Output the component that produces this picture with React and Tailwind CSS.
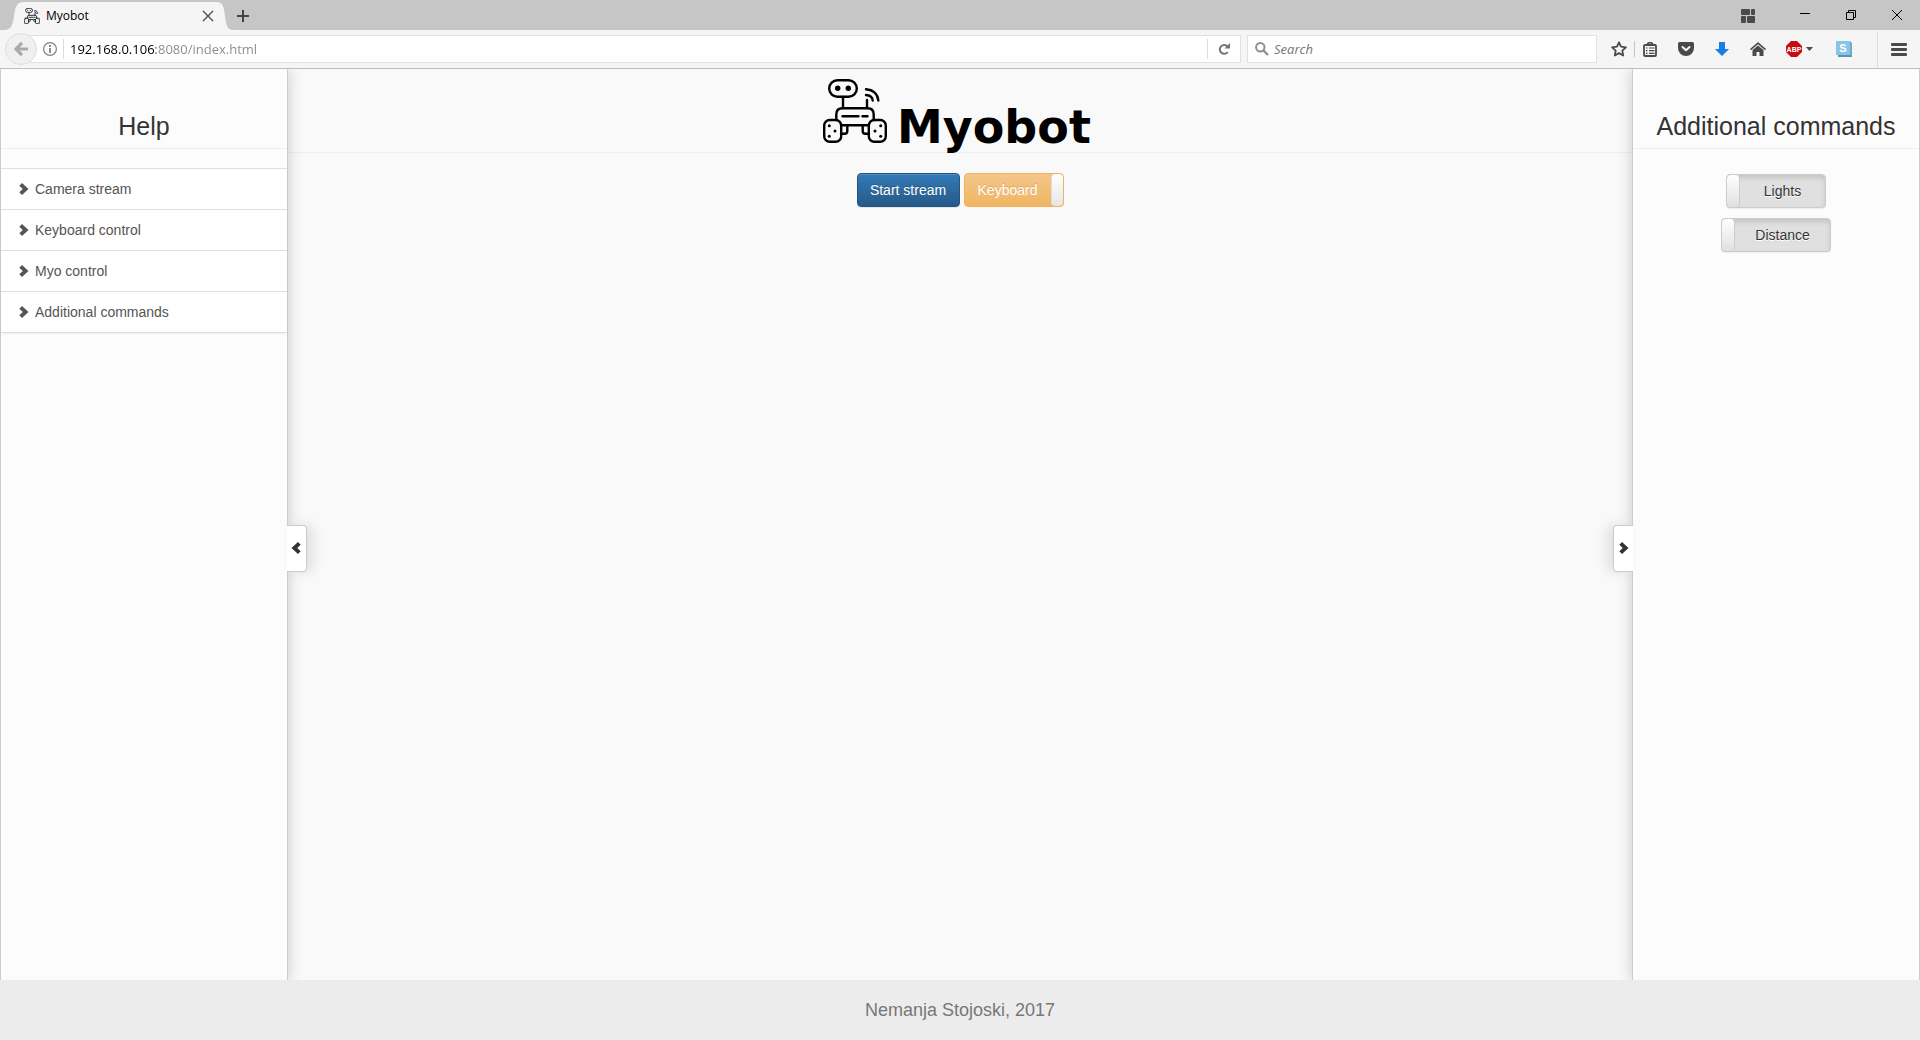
import React, { useState } from "react";

function Robot({ className, strokeWidth = 2.4 }) {
  return (
    <svg viewBox="0 0 64 64" className={className} fill="none" stroke="currentColor" strokeWidth={strokeWidth} strokeLinecap="round" aria-hidden="true">
      <rect x="6.2" y="1.2" width="27.6" height="16.6" rx="8.3" />
      <circle cx="14.7" cy="9.3" r="2.7" fill="currentColor" stroke="none" />
      <circle cx="25.3" cy="9.3" r="2.7" fill="currentColor" stroke="none" />
      <path d="M20 18v11M44 21v8M43 10.3C50 10.8 54.800 15 55.300 21.500M43 16c4 .3 6.500 2.500 6.700 5.500" />
      <path d="M13.300 41v-5.500q0-6.200 6.200-6.200h25q6.200 0 6.200 6.200V41M18 46.300h28" />
      <path d="M19.500 37.300h16M39.500 37.300h5" />
      <rect x="1.200" y="41" width="17" height="21.800" rx="5.500" />
      <rect x="45.800" y="41" width="17" height="21.800" rx="5.500" />
      <path d="M24.300 47v5q0 2.700-2.700 2.700H18M39.700 47v5q0 2.700 2.700 2.700H46" />
      <g fill="currentColor" stroke="none">
        <circle cx="6.300" cy="46.700" r="1.500" />
        <circle cx="12" cy="52" r="1.500" />
        <circle cx="6.300" cy="57.300" r="1.500" />
        <circle cx="57.700" cy="46.700" r="1.500" />
        <circle cx="52" cy="52" r="1.500" />
        <circle cx="57.700" cy="57.300" r="1.500" />
      </g>
    </svg>
  );
}

function Chevron({ className }) {
  return (
    <svg viewBox="0 0 10 12" className={className} aria-hidden="true">
      <path d="M.3 2.700 3 0l6.500 6L3 12 .3 9.300 3.800 6z" fill="currentColor" />
    </svg>
  );
}

function ToolButton({ label, className, children }) {
  return (
    <button type="button" aria-label={label} className={`flex h-6 shrink-0 items-center justify-center ${className}`}>
      {children}
    </button>
  );
}

function TabStrip() {
  return (
    <div className="flex h-[30px] items-end bg-[#c6c6c6]">
      <svg viewBox="0 0 24 28" className="h-7 w-6 shrink-0" aria-hidden="true">
        <path d="M0 28h4C11 28 12.500 24 14 14 15.500 4 17 0 24 0v28z" fill="#f5f5f5" />
      </svg>
      <div className="flex h-7 w-48 items-center bg-[#f5f5f5] text-black">
        <Robot className="h-4 w-4 shrink-0 text-[#333]" strokeWidth={4} />
        <span className="ml-1.5 flex-1 text-xs">Myobot</span>
        <button type="button" aria-label="Close tab" className="mr-0.5">
          <svg viewBox="0 0 12 12" className="h-3 w-3" fill="none" stroke="#444" strokeWidth="1.200">
            <path d="M1 1l10 10M11 1 1 11" />
          </svg>
        </button>
      </div>
      <svg viewBox="0 0 22 28" className="h-7 w-[22px] shrink-0" aria-hidden="true">
        <path d="M22 28h-4C11 28 10.500 24 9 14 7.500 4 7 0 0 0v28z" fill="#f5f5f5" />
      </svg>
      <button type="button" aria-label="New tab" className="-ml-px flex h-7 w-3 items-center justify-center">
        <svg viewBox="0 0 12 12" className="h-3 w-3" stroke="#444" strokeWidth="2">
          <path d="M6 0v12M0 6h12" />
        </svg>
      </button>
      <div className="ml-auto flex h-[30px] items-center">
        <button type="button" aria-label="Tab groups" className="mr-[45px] mt-0.5">
          <svg viewBox="0 0 14 14" className="h-3.5 w-3.5" fill="#4a4a4a">
            <rect width="9" height="6" rx="1" />
            <rect x="10" width="4" height="6" rx="1" />
            <rect y="7" width="5" height="7" rx="1" />
            <rect x="6" y="7" width="8" height="7" rx="1" />
          </svg>
        </button>
        <button type="button" aria-label="Minimize" className="mr-9">
          <svg viewBox="0 0 10 10" className="h-2.5 w-2.5" stroke="#000">
            <path d="M0 3.500h10" />
          </svg>
        </button>
        <button type="button" aria-label="Restore" className="mr-9">
          <svg viewBox="0 0 10 10" className="h-2.5 w-2.5" fill="none" stroke="#000">
            <path d="M.5 2.500h7v7h-7zM2.500 2V.5h7v7H8" />
          </svg>
        </button>
        <button type="button" aria-label="Close window" className="mr-[18px]">
          <svg viewBox="0 0 10 10" className="h-2.5 w-2.5" fill="none" stroke="#000">
            <path d="M0 0l10 10M10 0 0 10" />
          </svg>
        </button>
      </div>
    </div>
  );
}

function NavBar() {
  const [url, setUrl] = useState("192.168.0.106:8080/index.html");
  return (
    <div className="flex h-[39px] items-center border-b border-[#bfbfbf] bg-[#f5f5f5] pl-[5px] text-[#4a4a4a]">
      <button type="button" aria-label="Back" className="z-10 flex h-8 w-8 shrink-0 items-center justify-center rounded-full border border-[#dedede] bg-[#f0f0f0]">
        <svg viewBox="0 0 14 14" className="h-3.5 w-3.5" fill="none" stroke="#aaa" strokeWidth="3.200">
          <path d="M8 .8 2 7l6 6.200M2.500 7H14" />
        </svg>
      </button>
      <div className="-ml-2 flex h-7 flex-1 items-center border border-[#e1e1e1] bg-white pl-[13px]">
        <button type="button" aria-label="Site information" className="shrink-0">
          <svg viewBox="0 0 14 14" className="h-3.5 w-3.5" fill="none" stroke="#808080">
            <circle cx="7" cy="7" r="6.400" strokeWidth="1.200" />
            <path d="M7 3v2M7 6v5" strokeWidth="1.800" />
          </svg>
        </button>
        <span className="ml-1.5 h-5 border-l border-[#dcdcdc]" />
        <input
          aria-label="Address"
          value={url}
          onChange={(e) => setUrl(e.target.value)}
          className="ml-1.5 h-6 min-w-0 flex-1 bg-[linear-gradient(90deg,#000_86px,#8a8a8a_86px)] bg-clip-text text-[13px] text-transparent outline-none"
        />
        <span className="h-5 border-l border-[#dcdcdc]" />
        <button type="button" aria-label="Reload" className="flex h-6 w-8 shrink-0 items-center justify-center">
          <svg viewBox="0 0 12 12" className="h-3 w-3" fill="none" stroke="#747474" strokeWidth="2">
            <path d="M9.500 3.500A4.400 4.400 0 1 0 9.800 9" />
            <path d="M12 0v5.500H6.500z" fill="#747474" stroke="none" />
          </svg>
        </button>
      </div>
      <label className="ml-1.5 flex h-7 w-[350px] items-center border border-[#e1e1e1] bg-white pl-[7px]">
        <svg viewBox="0 0 14 14" className="h-3.5 w-3.5 shrink-0" fill="none" stroke="#8f8f8f">
          <circle cx="5.300" cy="5.300" r="4.200" strokeWidth="2" />
          <path d="M8.500 8.500 13 13" strokeWidth="2.400" />
        </svg>
        <input aria-label="Search" placeholder="Search" className="ml-[5px] h-6 min-w-0 flex-1 text-[13px] italic outline-none placeholder:text-[#757575]" />
      </label>
      <ToolButton label="Bookmark this page" className="ml-2.5 w-6">
        <svg viewBox="0 0 16 16" className="h-4 w-4" fill="none" stroke="currentColor" strokeWidth="1.800" strokeLinejoin="round">
          <path d="M8 1.300l2 4.400 4.900.6-3.600 3.300.9 4.900L8 12.100l-4.200 2.400.9-4.900L1.100 6.300 6 5.700z" />
        </svg>
      </ToolButton>
      <span className="ml-[3px] h-4 border-l border-[#c4c4c4]" />
      <ToolButton label="Bookmarks list" className="ml-[3px] w-6">
        <svg viewBox="0 0 14 15" className="h-[15px] w-3.5" fill="none" stroke="currentColor" strokeWidth="1.800">
          <rect x="1" y="3" width="12" height="11" rx="1" />
          <path d="M4.500 2.500C4.500 0 9.500 0 9.500 2.500" />
          <path d="M3 6h1.500M6 6h5.500M3 8.700h1.500M6 8.700h5.500M3 11.400h1.500M6 11.400h5.500" strokeWidth="1.200" />
        </svg>
      </ToolButton>
      <ToolButton label="Save to Pocket" className="ml-3 w-6">
        <svg viewBox="0 0 16 14" className="h-3.5 w-4">
          <path d="M1.500 0h13Q16 0 16 1.500V6a8 8 0 0 1-16 0V1.500Q0 0 1.500 0z" fill="currentColor" />
          <path d="M4.500 5 8 8.300 11.500 5" fill="none" stroke="#f5f5f5" strokeWidth="2" strokeLinecap="round" strokeLinejoin="round" />
        </svg>
      </ToolButton>
      <ToolButton label="Downloads" className="ml-3 w-6">
        <svg viewBox="0 0 14 14" className="h-3.5 w-3.5" fill="#177ee6">
          <path d="M4 0h6v7h4l-7 7-7-7h4z" />
        </svg>
      </ToolButton>
      <ToolButton label="Home" className="ml-3 w-6">
        <svg viewBox="0 0 16 14" className="h-3.5 w-4" fill="currentColor">
          <path d="M8 0l8 7-1 1.200L8 2.200 1 8.200 0 7z" />
          <path d="M8 3.400l5.500 4.600v6H9.500v-4h-3v4h-4V8z" />
        </svg>
      </ToolButton>
      <ToolButton label="Adblock Plus" className="ml-[13px] w-8 gap-1">
        <svg viewBox="0 0 16 16" className="h-4 w-4 shrink-0">
          <path d="M5 0h6l5 5v6l-5 5H5l-5-5V5z" fill="#c70d12" />
          <text x="8" y="10.800" textAnchor="middle" fontSize="7" fontWeight="700" fill="#fff" fontFamily="Liberation Sans, sans-serif">ABP</text>
        </svg>
        <svg viewBox="0 0 7 4" className="h-1 w-[7px] shrink-0" fill="currentColor">
          <path d="M0 0h7L3.500 4z" />
        </svg>
      </ToolButton>
      <ToolButton label="Stylish" className="ml-[17px] w-6">
        <svg viewBox="0 0 16 16" className="h-4 w-4">
          <path d="M2 2h14v14H2z" fill="#5b93a8" />
          <path d="M0 0h14v14H0z" fill="#86c5e8" />
          <path d="M14 0l2 2v14l-2-2z" fill="#6faac4" />
          <text x="7" y="11" textAnchor="middle" fontSize="11" fontWeight="700" fill="#fff" fontFamily="Liberation Sans, sans-serif">S</text>
        </svg>
      </ToolButton>
      <span className="ml-[21px] h-9 border-l border-[#dcdcdc]" />
      <ToolButton label="Open menu" className="mx-[9px] w-6">
        <svg viewBox="0 0 16 13" className="h-[13px] w-4" fill="currentColor">
          <rect width="16" height="3" rx="1" />
          <rect y="5" width="16" height="3" rx="1" />
          <rect y="10" width="16" height="3" rx="1" />
        </svg>
      </ToolButton>
    </div>
  );
}

function HelpPanel() {
  const topics = ["Camera stream", "Keyboard control", "Myo control", "Additional commands"];
  return (
    <aside className="relative z-10 w-72 shrink-0 border-x border-[#ccc] bg-[#fcfcfc] shadow-[0_0_14px_rgba(0,0,0,0.2)]">
      <h3 className="border-b border-[#eee] pb-[9px] pt-11 text-center text-[25px] leading-[26px]">Help</h3>
      <ul className="mt-[19px] border-t border-[#ddd] bg-white shadow-[0_1px_2px_rgba(0,0,0,0.05)]">
        {topics.map((topic) => (
          <li key={topic} className="border-b border-[#ddd]">
            <button type="button" className="flex h-10 w-full items-center pl-[18px] text-sm text-[#555]">
              <Chevron className="mr-1.5 h-3 w-2.5" />
              {topic}
            </button>
          </li>
        ))}
      </ul>
      <button type="button" aria-label="Hide help" className="absolute left-full top-1/2 flex h-[47px] w-5 items-center justify-center rounded-r border border-l-0 border-[#ccc] bg-white pr-0.5 shadow-[6px_0_12px_rgba(0,0,0,0.1)]">
        <Chevron className="h-3 w-2.5 rotate-180" />
      </button>
    </aside>
  );
}

function Toggle({ label, className }) {
  return (
    <label className={`flex h-[34px] overflow-hidden rounded border border-[#ccc] bg-[#e0e0e0] text-sm leading-8 shadow-[inset_0_3px_5px_rgba(0,0,0,0.125),0_1px_1px_rgba(0,0,0,0.06)] ${className}`}>
      <input type="checkbox" className="h-8 w-[13px] shrink-0 appearance-none rounded border-r border-[#ccc] bg-linear-to-b from-white to-[#e0e0e0]" />
      <span className="flex-1 text-center [text-shadow:0_1px_0_#fff]">{label}</span>
    </label>
  );
}

function CommandsPanel() {
  return (
    <aside className="relative z-10 w-72 shrink-0 border-x border-[#ccc] bg-[#fcfcfc] shadow-[0_0_14px_rgba(0,0,0,0.2)]">
      <h3 className="border-b border-[#eee] pb-[9px] pt-11 text-center text-[25px] leading-[26px]">Additional commands</h3>
      <div className="mt-[25px] flex flex-col items-center gap-2.5">
        <Toggle label="Lights" className="w-[100px]" />
        <Toggle label="Distance" className="w-[110px]" />
      </div>
      <button type="button" aria-label="Hide additional commands" className="absolute right-full top-1/2 flex h-[47px] w-5 items-center justify-center rounded-l border border-r-0 border-[#ccc] bg-white shadow-[-6px_0_12px_rgba(0,0,0,0.1)]">
        <Chevron className="h-3 w-2.5" />
      </button>
    </aside>
  );
}

export default function App() {
  return (
    <div className="flex min-h-screen flex-col bg-[#f9f9f9] font-['Liberation_Sans',Arial,sans-serif] text-[#333]">
      <header className="font-['Open_Sans',sans-serif]">
        <TabStrip />
        <NavBar />
      </header>
      <div className="flex flex-1 overflow-hidden">
        <HelpPanel />
        <main className="flex-1">
          <div className="flex items-end justify-center border-b border-[#eee] pb-[9px] pt-2.5 text-black">
            <Robot className="h-16 w-16" />
            <h1 className="ml-2.5 w-[200px] font-['DejaVu_Sans',sans-serif] text-[46px] font-bold leading-8">Myobot</h1>
          </div>
          <div className="flex justify-center gap-1 pt-5 text-sm text-white">
            <button type="button" className="h-[34px] w-[103px] rounded border border-[#245580] bg-linear-to-b from-[#337ab7] to-[#265a88] shadow-[inset_0_1px_0_rgba(255,255,255,0.15),0_1px_1px_rgba(0,0,0,0.075)] [text-shadow:0_-1px_0_rgba(0,0,0,0.2)]">
              Start stream
            </button>
            <label className="flex h-[34px] w-[100px] overflow-hidden rounded border border-[#f0b260] bg-linear-to-b from-[#f3c68a] to-[#f0b560] leading-8">
              <span className="flex-1 text-center [text-shadow:0_-1px_0_rgba(0,0,0,0.15)]">Keyboard</span>
              <input type="checkbox" defaultChecked className="h-8 w-3 shrink-0 appearance-none rounded border-l border-[#ddd] bg-linear-to-b from-white to-[#e6e6e6]" />
            </label>
          </div>
        </main>
        <CommandsPanel />
      </div>
      <footer className="flex h-[60px] items-center justify-center bg-[#ececec] text-lg text-[#777]">Nemanja Stojoski, 2017</footer>
    </div>
  );
}
